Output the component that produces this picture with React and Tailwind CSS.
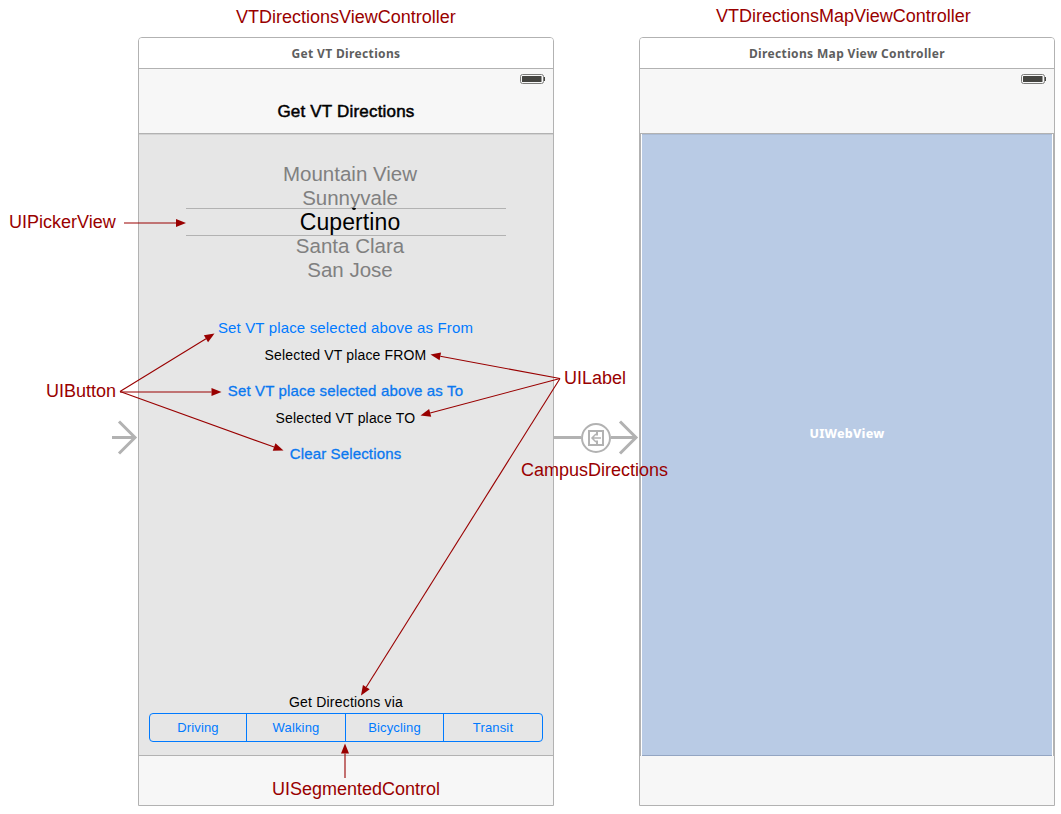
const Battery = () => (
  <svg width="26" height="10" viewBox="0 0 26 10" className="block">
    <rect x="0.5" y="0.5" width="23" height="9" rx="2" fill="#f7f7f7" stroke="#7d7d7b" />
    <rect x="2" y="2" width="19.5" height="6" rx=".5" fill="#454541" />
    <path d="M24 3h1v4h-1z" fill="#454541" />
  </svg>
);

function Scene({ title, navTitle, children }) {
  return (
    <section className="flex h-[769px] w-[416px] flex-col overflow-hidden rounded-t-[4px] border border-[#b2b2b2] bg-[#f7f7f7]">
      <header className="flex h-[31px] shrink-0 items-center justify-center border-b border-[#b2b2b2] bg-white pt-[2px] font-['Noto_Sans',sans-serif] text-[12px] font-bold tracking-[0.35px] text-[#5e5e5e]">
        {title}
      </header>
      <div className="flex h-[65px] shrink-0 flex-col border-b border-[#b2b2b2]">
        <div className="flex h-5 items-center justify-end pr-[7px]">
          <Battery />
        </div>
        <div className="flex h-[44px] items-center justify-center pt-[2px] text-[17px] tracking-[0.19px] text-black [-webkit-text-stroke:0.5px_black]">
          {navTitle}
        </div>
      </div>
      {children}
      <footer className="h-[49px] shrink-0" />
    </section>
  );
}

const Heading = ({ className, children }) => (
  <span className={"absolute whitespace-nowrap text-[18px] leading-5 text-[#990000] " + className}>{children}</span>
);

function Arrow({ x1, y1, x2, y2 }) {
  const len = Math.hypot(x2 - x1, y2 - y1);
  const ux = (x2 - x1) / len;
  const uy = (y2 - y1) / len;
  const bx = x2 - ux * 10;
  const by = y2 - uy * 10;
  return (
    <g>
      <line x1={x1} y1={y1} x2={bx} y2={by} stroke="#990000" strokeWidth="1.1" />
      <polygon points={`${x2},${y2} ${bx - uy * 4},${by + ux * 4} ${bx + uy * 4},${by - ux * 4}`} fill="#990000" />
    </g>
  );
}

const arrows = [
  [124, 223, 186, 223],
  [120, 391.5, 214.5, 333.5],
  [120, 392, 221.5, 392],
  [120, 391.5, 283.5, 450.5],
  [560, 378.5, 430.5, 354.5],
  [560, 378.5, 420.5, 415.5],
  [560, 378.5, 361, 695.5],
  [345, 778, 345, 743.5],
];

const pickerRow = "flex h-6 items-center justify-center text-[20.5px] text-[#808080]";

export default function App() {
  return (
    <main className="relative h-[814px] w-[1061px] overflow-hidden bg-white font-['Liberation_Sans',Arial,sans-serif]">
      <div className="flex gap-[85px] pl-[138px] pt-[37px]">
        <Scene title="Get VT Directions" navTitle="Get VT Directions">
          <div className="flex h-[622px] shrink-0 flex-col border-b border-t border-b-[#b2b2b2] border-t-[#d2d2d2] bg-[#e6e6e6] text-black">
            <div className="ml-[47px] mt-[27px] flex w-[320px] flex-col pl-2">
              <div className={pickerRow}>Mountain View</div>
              <div className={pickerRow}>Sunnyvale</div>
              <div className="relative -ml-2 -mt-[2px] flex h-[28px] items-center justify-center border-y border-[#b2b2b2] pl-2 text-[23px] tracking-[0.1px]">
                Cupertino
                <span className="absolute left-[166px] top-[-1px] h-[2px] w-[4px] rounded-b-sm bg-black" />
              </div>
              <div className={pickerRow + " -mt-[2px]"}>Santa Clara</div>
              <div className={pickerRow}>San Jose</div>
            </div>
            <div className="mt-[31px] flex flex-col items-center pr-px">
              <div className="flex h-[30px] items-center text-[15px] tracking-[0.15px] text-[#007aff]">Set VT place selected above as From</div>
              <div className="flex h-[25px] items-center text-[14px] tracking-[0.15px]">Selected VT place FROM</div>
              <div className="mt-2 flex h-[30px] items-center text-[15px] tracking-[0.15px] text-[#0a78f0] [-webkit-text-stroke:0.3px_#0a78f0]">Set VT place selected above as To</div>
              <div className="flex h-[25px] items-center text-[14px] tracking-[0.18px]">Selected VT place TO</div>
              <div className="mt-2 flex h-[30px] items-center text-[15px] tracking-[0.15px] text-[#0a78f0] [-webkit-text-stroke:0.3px_#0a78f0]">Clear Selections</div>
            </div>
            <div className="mt-auto flex flex-col items-center pb-[13px]">
              <div className="flex h-[22px] items-center text-[14px] tracking-[0.2px]">Get Directions via</div>
              <div className="grid h-[29px] w-[394px] grid-cols-[97px_99px_98px_98px] rounded-[4px] border border-[#007aff] text-[13px] tracking-[0.15px] text-[#007aff]">
                {["Driving", "Walking", "Bicycling", "Transit"].map((mode) => (
                  <div key={mode} className="flex items-center justify-center border-r border-[#007aff] last:border-r-0">{mode}</div>
                ))}
              </div>
            </div>
          </div>
        </Scene>
        <Scene title="Directions Map View Controller">
          <div className="flex h-[622px] shrink-0 border-x border-[#b2b2b2] bg-white px-px">
            <div className="flex flex-1 items-center justify-center border-b border-t border-b-[#93a5c2] border-t-[#aabbd5] bg-[#b9cbe5] pb-[22px] font-['Noto_Sans',sans-serif] text-[12.5px] font-extrabold tracking-[0.2px] text-white">
              UIWebView
            </div>
          </div>
        </Scene>
      </div>

      <svg className="absolute left-0 top-0" width="1061" height="814" viewBox="0 0 1061 814">
        <g fill="none" stroke="#b2b2b2" strokeWidth="3">
          <path d="M112 437.5h23M119 421.5l16 16l-16 16" />
          <path d="M554 437.5h27M611 437.5h25M620 421.5l16 16l-16 16" />
          <circle cx="596" cy="438" r="14" strokeWidth="2" />
          <path d="M589 431h14v14h-14zM597 431v4.5M597 440.5v4.5" strokeWidth="2" />
          <path d="M601 438h-8.5M596 434l-4 4l4 4" strokeWidth="1.5" />
        </g>
        {arrows.map(([x1, y1, x2, y2], i) => (
          <Arrow key={i} x1={x1} y1={y1} x2={x2} y2={y2} />
        ))}
      </svg>

      <Heading className="left-[236px] top-[7px]">VTDirectionsViewController</Heading>
      <Heading className="left-[716px] top-[6px]">VTDirectionsMapViewController</Heading>
      <Heading className="left-[9px] top-[212px]">UIPickerView</Heading>
      <Heading className="left-[46px] top-[381px]">UIButton</Heading>
      <Heading className="left-[564px] top-[368px]">UILabel</Heading>
      <Heading className="left-[521px] top-[460px]">CampusDirections</Heading>
      <Heading className="left-[272px] top-[779px]">UISegmentedControl</Heading>
    </main>
  );
}
